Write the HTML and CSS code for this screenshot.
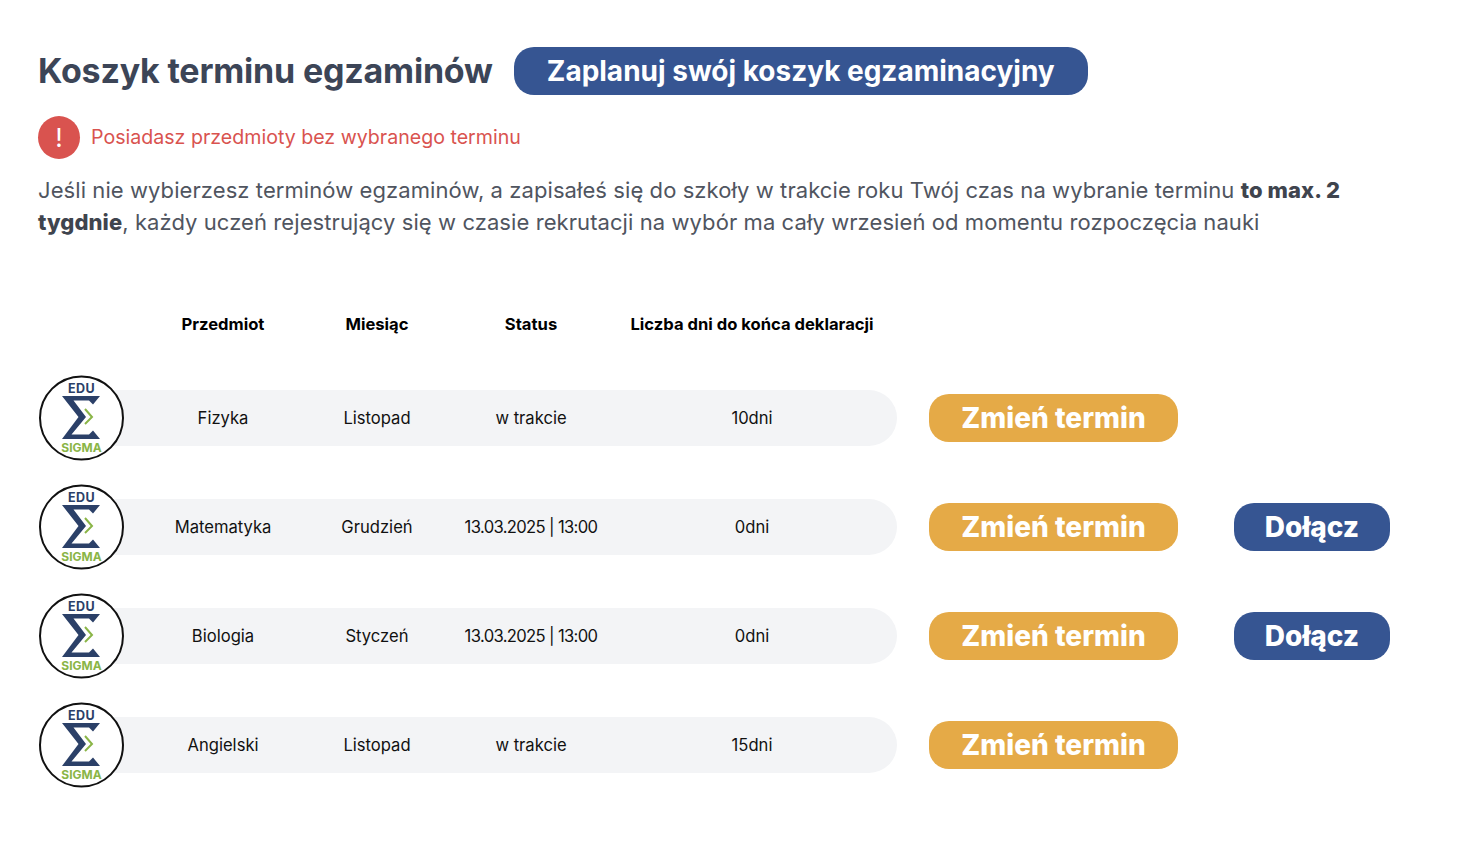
FILE: index.html
```html
<!DOCTYPE html>
<html lang="pl">
<head>
<meta charset="UTF-8">
<meta name="viewport" content="width=device-width, initial-scale=1.0">
<title>Koszyk terminu egzaminów</title>
<link rel="stylesheet" href="styles.css">
</head>
<body>
<div class="page">
  <div class="head">
    <h1 class="title">Koszyk terminu egzaminów</h1>
    <a class="plan-btn">Zaplanuj swój koszyk egzaminacyjny</a>
  </div>

  <div class="alert">
    <span class="alert-icon">!</span>
    <span class="alert-text">Posiadasz przedmioty bez wybranego terminu</span>
  </div>

  <p class="info">Jeśli nie wybierzesz terminów egzaminów, a zapisałeś się do szkoły w trakcie roku Twój czas na wybranie terminu <b>to max. 2 tygdnie</b>, każdy uczeń rejestrujący się w czasie rekrutacji na wybór ma cały wrzesień od momentu rozpoczęcia nauki</p>

  <div class="cols table-head">
    <div>Przedmiot</div>
    <div>Miesiąc</div>
    <div>Status</div>
    <div>Liczba dni do końca deklaracji</div>
  </div>

  <div class="row">
    <svg class="logo" viewBox="0 0 86 86">
      <circle cx="43.5" cy="43" r="41.5" fill="#fff" stroke="#111" stroke-width="2"/>
      <text class="logo-edu" x="43.5" y="18" text-anchor="middle">EDU</text>
      <path d="M24 21H62L55 29.5L51 25.5H35.5L48 42L33.5 59.5H51L55 55.5L62 64H24L40.5 42Z" fill="#2b4068"/>
      <path d="M47 34L54 42L47 49" fill="none" stroke="#8ab547" stroke-width="2"/>
      <text class="logo-sigma" x="43.5" y="76.5" text-anchor="middle">SIGMA</text>
    </svg>
    <div class="cols bar">
      <div>Fizyka</div><div>Listopad</div><div>w trakcie</div><div>10dni</div>
    </div>
    <a class="btn btn-change">Zmień termin</a>
  </div>

  <div class="row">
    <svg class="logo" viewBox="0 0 86 86">
      <circle cx="43.5" cy="43" r="41.5" fill="#fff" stroke="#111" stroke-width="2"/>
      <text class="logo-edu" x="43.5" y="18" text-anchor="middle">EDU</text>
      <path d="M24 21H62L55 29.5L51 25.5H35.5L48 42L33.5 59.5H51L55 55.5L62 64H24L40.5 42Z" fill="#2b4068"/>
      <path d="M47 34L54 42L47 49" fill="none" stroke="#8ab547" stroke-width="2"/>
      <text class="logo-sigma" x="43.5" y="76.5" text-anchor="middle">SIGMA</text>
    </svg>
    <div class="cols bar">
      <div>Matematyka</div><div>Grudzień</div><div class="date">13.03.2025 | 13:00</div><div>0dni</div>
    </div>
    <a class="btn btn-change">Zmień termin</a>
    <a class="btn btn-join">Dołącz</a>
  </div>

  <div class="row">
    <svg class="logo" viewBox="0 0 86 86">
      <circle cx="43.5" cy="43" r="41.5" fill="#fff" stroke="#111" stroke-width="2"/>
      <text class="logo-edu" x="43.5" y="18" text-anchor="middle">EDU</text>
      <path d="M24 21H62L55 29.5L51 25.5H35.5L48 42L33.5 59.5H51L55 55.5L62 64H24L40.5 42Z" fill="#2b4068"/>
      <path d="M47 34L54 42L47 49" fill="none" stroke="#8ab547" stroke-width="2"/>
      <text class="logo-sigma" x="43.5" y="76.5" text-anchor="middle">SIGMA</text>
    </svg>
    <div class="cols bar">
      <div>Biologia</div><div>Styczeń</div><div class="date">13.03.2025 | 13:00</div><div>0dni</div>
    </div>
    <a class="btn btn-change">Zmień termin</a>
    <a class="btn btn-join">Dołącz</a>
  </div>

  <div class="row">
    <svg class="logo" viewBox="0 0 86 86">
      <circle cx="43.5" cy="43" r="41.5" fill="#fff" stroke="#111" stroke-width="2"/>
      <text class="logo-edu" x="43.5" y="18" text-anchor="middle">EDU</text>
      <path d="M24 21H62L55 29.5L51 25.5H35.5L48 42L33.5 59.5H51L55 55.5L62 64H24L40.5 42Z" fill="#2b4068"/>
      <path d="M47 34L54 42L47 49" fill="none" stroke="#8ab547" stroke-width="2"/>
      <text class="logo-sigma" x="43.5" y="76.5" text-anchor="middle">SIGMA</text>
    </svg>
    <div class="cols bar">
      <div>Angielski</div><div>Listopad</div><div>w trakcie</div><div>15dni</div>
    </div>
    <a class="btn btn-change">Zmień termin</a>
  </div>
</div>
</body>
</html>
```

FILE: styles.css
```css
* { margin: 0; padding: 0; box-sizing: border-box; }
body {
  font-family: Inter, "Open Sans", sans-serif;
  background: #fff;
  color: #111;
}
.page { padding: 47px 0 0 38px; }

.head { display: flex; align-items: center; gap: 21px; }
.title { font-size: 34px; font-weight: 700; letter-spacing: -.2px; color: #3c4557; line-height: 48px; white-space: nowrap; }
.plan-btn {
  height: 48px; width: 574px;
  background: #365592; color: #fff;
  border-radius: 20px;
  font-size: 28px; font-weight: 700;
  display: flex; align-items: center; justify-content: center;
  white-space: nowrap;
}

.alert { display: flex; align-items: center; gap: 11px; margin-top: 21px; }
.alert-icon {
  width: 42px; height: 43px;
  background: #d9534f; color: #fff;
  border-radius: 50%;
  font-size: 26px;
  display: flex; align-items: center; justify-content: center;
}
.alert-text { font-size: 19.6px; color: #d9534f; padding-bottom: 2px; }

.info { font-size: 22px; line-height: 32px; letter-spacing: .08px; color: #50555f; width: 1320px; margin-top: 15px; }
.info b { color: #3f444e; font-weight: 800; }

.cols {
  display: grid;
  grid-template-columns: 154px 154px 154px 288px;
  text-align: center;
  font-size: 16.6px;
}
.table-head { margin: 74px 0 0 108px; font-weight: 700; color: #000; line-height: 24px; white-space: nowrap; }
.table-head + .row { margin-top: 39px; }

.row { display: flex; align-items: center; height: 86px; margin-bottom: 23px; }
.logo { width: 86px; height: 86px; flex: none; position: relative; z-index: 1; }
.logo-edu { font-size: 12.5px; font-weight: 700; letter-spacing: .4px; fill: #2b4068; }
.logo-sigma { font-size: 12px; font-weight: 700; fill: #8ab547; }
.bar {
  margin-left: -14px; padding-left: 36px;
  width: 787px; height: 56px;
  background: #f3f4f6;
  border-radius: 0 28px 28px 0;
  align-items: center;
}
.date { letter-spacing: -.65px; }
.btn {
  height: 48px;
  border-radius: 20px;
  color: #fff;
  font-size: 28px; font-weight: 800;
  display: flex; align-items: center; justify-content: center;
  white-space: nowrap;
}
.btn-change { width: 249px; margin-left: 32px; background: #e5aa47; }
.btn-join { width: 156px; margin-left: 56px; background: #365592; }
```
